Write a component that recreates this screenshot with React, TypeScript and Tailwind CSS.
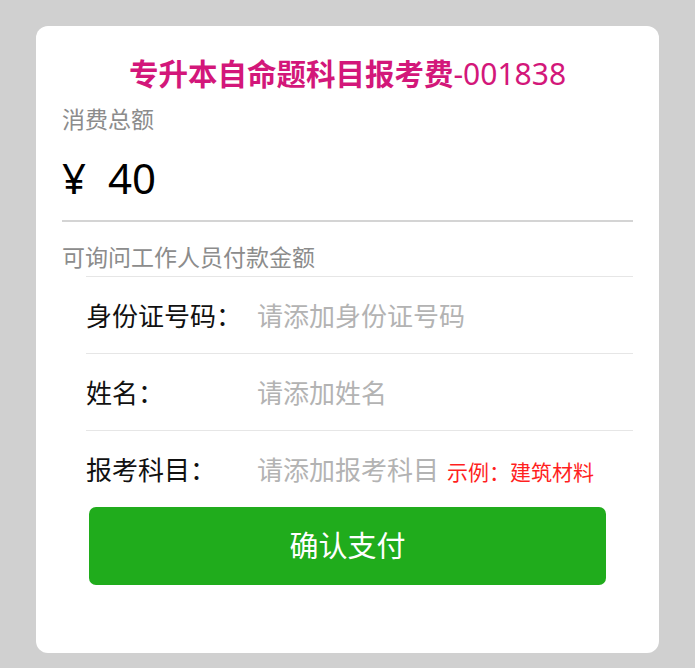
import React from "react";

const font = { fontFamily: '"Noto Sans", "Noto Sans CJK SC", sans-serif' };

function Row({ label, placeholder, extra }: { label: string; placeholder: string; extra?: string }) {
  return (
    <div className="flex h-[77px] items-center border-t border-[#e6e6e6] pt-[1px]">
      <div className="w-[171px] shrink-0 text-[26px] leading-[36px] text-[#111]">{label}</div>
      <div className="flex items-end">
        <span className="text-[26px] leading-[36px] text-[#b3b3b3]">{placeholder}</span>
        {extra && <span className="ml-[8px] text-[21px] leading-[32px] text-[#ff1f1f]">{extra}</span>}
      </div>
    </div>
  );
}

export default function App() {
  return (
    <div className="min-h-[668px] w-[695px] bg-[#d0d0d0] pt-[26px]" style={font}>
      <div className="mx-[36px] rounded-[12px] bg-white px-[26px] pb-[68px] pt-[30px]">
        <div className="flex h-[36px] items-center justify-center text-[29.5px] leading-[36px] text-[#d3177a]">
          <span className="font-semibold">专升本自命题科目报考费</span>
          <span className="text-[30px]">-001838</span>
        </div>
        <div className="mt-[12px] flex h-[30px] items-center text-[23px] text-[#8c8c8c]">消费总额</div>
        <div className="mt-[19px] flex h-[50px] items-center text-[42px] leading-[50px] text-black">
          <span>¥</span>
          <span className="ml-[22px]">40</span>
        </div>
        <div className="mt-[17px] h-[2px] bg-[#d4d4d4]" />
        <div className="mt-[20px] flex h-[30px] items-center text-[23px] text-[#8c8c8c]">可询问工作人员付款金额</div>
        <div className="ml-[24px] mt-[4px]">
          <Row label="身份证号码：" placeholder="请添加身份证号码" />
          <Row label="姓名：" placeholder="请添加姓名" />
          <Row label="报考科目：" placeholder="请添加报考科目" extra="示例：建筑材料" />
        </div>
        <div className="mx-[27px] flex h-[78px] items-center justify-center rounded-[7px] bg-[#20ac1c] text-[29px] text-white">
          确认支付
        </div>
      </div>
    </div>
  );
}
